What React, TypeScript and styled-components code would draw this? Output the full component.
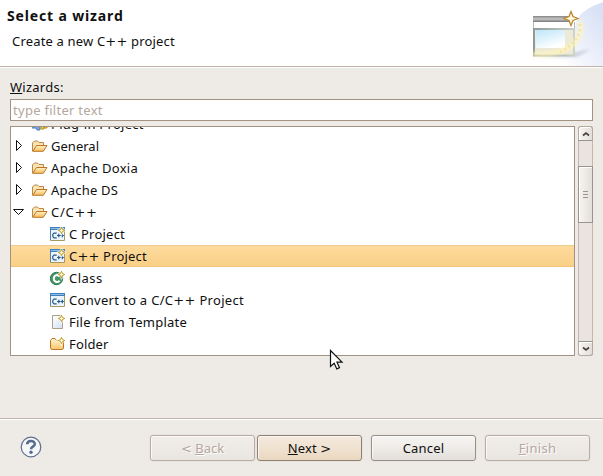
import React from 'react';
import styled, { createGlobalStyle } from 'styled-components';

const Global = createGlobalStyle`
  * { box-sizing: border-box; }
  body { margin: 0; background: #eeebe6; font: 13px/22px "Noto Sans", sans-serif; color: #101010; overflow: hidden; }
  svg { display: block; flex: none; }
`;
const Dialog = styled.main`width: 603px; height: 476px; display: flex; flex-direction: column; background: #eeebe6; overflow: hidden;`;
const Header = styled.header`height: 68px; flex: none; display: flex; justify-content: space-between; background: #fff; border-bottom: 1px solid #fff; box-shadow: inset 0 -1px #c2b3a6;`;
const Titles = styled.div`padding: 5px 0 0 7px;`;
const Title = styled.h1`margin: 0; font: bold 14px/22px "Noto Sans", sans-serif; letter-spacing: .85px; height: 25px; white-space: nowrap;`;
const Subtitle = styled.p`margin: 0 0 0 5px;`;
const Text = styled.span<{ $ls?: number }>`letter-spacing: ${p => p.$ls ?? 0}px; white-space: pre;`;
const Wide = styled.span`font-family: "DejaVu Sans", sans-serif; line-height: 1;`;
const Mnemonic = styled.span`text-decoration: underline 1px; text-underline-offset: 1px; text-decoration-skip-ink: none;`;
const Body = styled.section`height: 350px; flex: none; padding: 8px 10px 0; display: flex; flex-direction: column;`;
const FieldLabel = styled.label`height: 23px; flex: none;`;
const Filter = styled.div`height: 22px; flex: none; border: 1px solid #a19283; background: #fff; padding-left: 2px; line-height: 21px; color: #b5a79c; width: 583px;`;
const TreeArea = styled.div`display: flex; gap: 3px; margin-top: 5px; height: 230px;`;
const Tree = styled.div`width: 565px; border: 1px solid #a19283; background: #fff; overflow: hidden;`;
const Rows = styled.div`margin-top: -14px;`;
const Row = styled.div<{ $child?: boolean; $selected?: boolean }>`
  height: 22px; display: flex; align-items: center; padding-left: ${p => (p.$child ? 39 : 0)}px;
  background: ${p => (p.$selected ? 'linear-gradient(#fedb9d, #f9cf86)' : 'transparent')};
  box-shadow: ${p => (p.$selected ? 'inset 0 1px #efca91, inset 0 -1px #f0c47b' : 'none')};
`;
const Arrow = styled.span`width: 21px; display: flex;`;
const Icon = styled.span<{ $w: number }>`width: ${p => p.$w}px; flex: none; display: flex;`;
const Scrollbar = styled.div`width: 15px; display: flex; flex-direction: column; background: #e9e4df; border: solid #c5b7ab; border-width: 0 1px; border-radius: 3px;`;
const ScrollPart = styled.div<{ $h: number; $up?: boolean; $down?: boolean }>`
  height: ${p => p.$h}px; width: 15px; margin-left: -1px; flex: none; display: flex; align-items: center; justify-content: center;
  border: 1px solid #9b948d; background: linear-gradient(90deg, #f6f4f2, #e4dfda); box-shadow: inset 1px 1px #fff;
  border-color: ${p => (p.$up ? '#b5aaa0 #b5aaa0 #9b948d' : p.$down ? '#9b948d #b5aaa0 #b5aaa0' : '#9b948d')};
  border-radius: ${p => (p.$up ? '3px 3px 0 0' : p.$down ? '0 0 3px 3px' : '0')};
`;
const Track = styled.div<{ $h: number }>`height: ${p => p.$h}px; flex: none;`;
const Footer = styled.footer`height: 58px; flex: none; border-top: 1px solid #c2b3a6; box-shadow: inset 0 1px #fff; display: flex; align-items: flex-start; padding: 16px 13px 0 20px;`;
const Help = styled.div`width: 130px; padding-top: 1px;`;
const Button = styled.button<{ $tone?: 'default' | 'disabled'; $gap?: number }>`
  width: 105px; height: 26px; flex: none; margin: 0 ${p => p.$gap ?? 0}px 0 0; padding: 0 0 1px; font: 13px/22px "Noto Sans", sans-serif;
  border-radius: 3px; border: 1px solid ${p => (p.$tone === 'disabled' ? '#b9ada3' : p.$tone === 'default' ? '#8c8174' : '#96908a')};
  color: ${p => (p.$tone === 'disabled' ? '#b5a79c' : '#101010')};
  text-shadow: ${p => (p.$tone === 'disabled' ? '1px 1px #fff' : 'none')};
  background: ${p => (p.$tone === 'default' ? 'linear-gradient(#f4eadf, #f0e2d0 50%, #ead7c0)' : p.$tone === 'disabled' ? 'linear-gradient(#f1eeea, #e9e5e1)' : 'linear-gradient(#f7f5f3, #eeebe8 50%, #e3deda)')};
  box-shadow: inset 1px 1px rgba(255,255,255,.7), 0 0 0 1px rgba(150,130,110,.06);
`;
const Pointer = styled.div`position: absolute; left: 329px; top: 349px;`;

/* Operator characters are set in a face with full-width math signs. */
const Label = ({ text, ls }: { text: string; ls?: number }) => (
  <Text $ls={ls}>
    {text.split(/([+<>]+)/).map((part, i) => (i % 2 ? <Wide key={i}>{part}</Wide> : part))}
  </Text>
);

const Sparkle = () => (
  <>
    <path d="M11.5 0 13 3l3 1.5L13 6l-1.5 3L10 6 7 4.5 10 3Z" fill="#fff" stroke="#fff" strokeWidth="1.5" opacity=".6" />
    <path d="m11.5 1.3 1 2.2 2.2 1-2.2 1-1 2.2-1-2.2-2.2-1 2.2-1Z" fill="#fff9d4" stroke="#bd971d" strokeWidth=".95" />
  </>
);

const FolderOpen = () => (
  <svg width="16" height="16" viewBox="0 0 16 16">
    <defs><linearGradient id="fo" x2="0" y2="1"><stop stopColor="#fff0c7" /><stop offset="1" stopColor="#f4bd5b" /></linearGradient></defs>
    <path d="M.5 13v-8l1-1 1-1h3l1.5 1.5h4.5v3" fill="#f9e3b2" stroke="#bc8746" />
    <path d="m.7 13.3 3.8-5.8H15l-3.7 5.8Z" fill="url(#fo)" stroke="#b97727" />
  </svg>
);
const CppIcon = ({ spark }: { spark?: boolean }) => (
  <svg width="16" height="16" viewBox="0 0 16 16">
    <path d="M.5 1.5h14v13H.5Z" fill="#edf5fc" stroke="#a7985e" />
    <path d="M0 1h15v3H0Z" fill="#3f7fbd" /><path d="M1 2h13v1H1Z" fill="#8dbee6" />
    <path d="M.5 4v10" stroke="#5380ac" />
    <path d="M6.7 7.2H4L2.8 8.4v2.2L4 11.8h2.7M7 9.5h3.5M8.8 7.8v3.4M10.8 9.5h3M12.3 7.8v3.4" fill="none" stroke="#25568c" strokeWidth="1.2" />
    {spark && <Sparkle />}
  </svg>
);
const ClassIcon = () => (
  <svg width="16" height="16" viewBox="0 0 16 16">
    <circle cx="6.5" cy="8.5" r="6.2" fill="#469467" stroke="#2b7950" />
    <path d="M9.6 6.4C7.8 4.2 3.8 5.2 3.8 8.6s3.7 4.4 5.9 2.2" fill="none" stroke="#fff" strokeWidth="2" /><Sparkle />
  </svg>
);
const FileIcon = () => (
  <svg width="16" height="16" viewBox="0 0 16 16">
    <defs><linearGradient id="fi" x2="1" y2="1"><stop stopColor="#fff" /><stop offset="1" stopColor="#d3dff5" /></linearGradient></defs>
    <path d="M2.5 1.5h8l2 2v11h-10Z" fill="url(#fi)" stroke="#aaa184" /><Sparkle />
  </svg>
);
const FolderIcon = () => (
  <svg width="16" height="16" viewBox="0 0 16 16">
    <defs><linearGradient id="fc" x2="0" y2="1"><stop stopColor="#fff3cf" /><stop offset="1" stopColor="#fac66b" /></linearGradient></defs>
    <path d="M.5 12V4.5l1.5-2h3l1.5 2h7V12l-1 1.5h-11Z" fill="url(#fc)" stroke="#b97727" /><Sparkle />
  </svg>
);
const PluginIcon = () => (
  <svg width="16" height="16" viewBox="0 0 16 16">
    <path d="M0 8h3l2-3h3v9H5l-1-2H0Z" fill="#75a4d8" stroke="#5282b9" /><path d="M9 10h3v3H9ZM12 5h3v7h-3Z" fill="#f5d255" stroke="#b68e13" />
  </svg>
);
const Closed = () => <svg width="16" height="16" viewBox="0 0 16 16"><path d="M5.5 2.5v10l5-5Z" fill="#fff" stroke="#111" /></svg>;
const Opened = () => <svg width="16" height="16" viewBox="0 0 16 16"><path d="M2.5 5.5h10l-5 5Z" fill="#fff" stroke="#111" /></svg>;
const Chevron = ({ down }: { down?: boolean }) => (
  <svg width="8" height="6" viewBox="0 0 8 6"><path d={down ? 'M1 1.5 4 4l3-2.5' : 'M1 4.5 4 2l3 2.5'} fill="none" stroke="#49433e" strokeWidth="1.7" /></svg>
);
const Banner = () => (
  <svg width="100" height="66" viewBox="0 0 100 66">
    <defs>
      <linearGradient id="sky" x1=".25" y1=".75" x2="1" y2=".2"><stop stopColor="#fff" /><stop offset=".4" stopColor="#eff2fb" /><stop offset="1" stopColor="#d8e1f5" /></linearGradient>
      <linearGradient id="bar" x2="0" y2="1"><stop stopColor="#858585" /><stop offset=".5" stopColor="#c6c6c6" /><stop offset="1" stopColor="#777" /></linearGradient>
      <linearGradient id="pane" x2=".5" y2="1"><stop stopColor="#bde5fa" /><stop offset="1" stopColor="#fff" /></linearGradient>
      <linearGradient id="frame" gradientUnits="userSpaceOnUse" x1="30" y1="0" x2="74" y2="0"><stop stopColor="#8d9999" /><stop offset="1" stopColor="#cfd5ca" /></linearGradient>
      <filter id="soft" filterUnits="userSpaceOnUse" x="0" y="0" width="100" height="66"><feGaussianBlur stdDeviation="1.6" /></filter>
    </defs>
    <path d="M100 2C86 7 78 12 74 20c-3 17-20 33-44 46h70Z" fill="url(#sky)" />
    <path d="M36 57h38l14-8-14 3Z" fill="#8292b3" opacity=".35" filter="url(#soft)" />
    <path d="M30 16h42v40H30Z" fill="#fff" />
    <path d="M30.5 18v10M71.5 22v8" stroke="#b5bab8" />
    <path d="M30 16h40v6H30Z" fill="url(#bar)" />
    <path d="M31 29h40v26.5H31Z" fill="#ece9d8" stroke="url(#frame)" strokeWidth="2" />
    <path d="M33 30h29v18H33Z" fill="url(#pane)" />
    <path d="M77 21c5 20-14 36-47 33" fill="none" stroke="#fff5bd" strokeWidth="5" opacity=".75" filter="url(#soft)" />
    <path d="M77 24q1 18-20 28" fill="none" stroke="#f0d97e" strokeWidth="2.5" strokeDasharray="2 3" opacity=".55" />
    <path d="m68 11.5 2 5 5 2-5 2-2 5-2-5-5-2 5-2Z" fill="#fff8db" stroke="#bd8730" strokeWidth="1.3" />
  </svg>
);

const groups = [
  { label: 'Plug-in Project', plugin: true, ls: 0.27 },
  { label: 'General', ls: 0.02 },
  { label: 'Apache Doxia', ls: 0.33 },
  { label: 'Apache DS', ls: 0.22 },
  { label: 'C/C++', open: true, ls: 0.7 },
];
const wizards = [
  { label: 'C Project', icon: <CppIcon spark />, ls: 0.22 },
  { label: 'C++ Project', icon: <CppIcon spark />, selected: true, ls: 0.18 },
  { label: 'Class', icon: <ClassIcon />, ls: 0.45 },
  { label: 'Convert to a C/C++ Project', icon: <CppIcon />, ls: 0.31 },
  { label: 'File from Template', icon: <FileIcon />, ls: 0.25 },
  { label: 'Folder', icon: <FolderIcon />, ls: 0.15 },
];

export default function App() {
  return (
    <Dialog>
      <Global />
      <Header>
        <Titles>
          <Title>Select a wizard</Title>
          <Subtitle><Label text="Create a new C++ project" ls={0.17} /></Subtitle>
        </Titles>
        <Banner />
      </Header>
      <Body>
        <FieldLabel><Text $ls={0.25}><Mnemonic>W</Mnemonic>izards:</Text></FieldLabel>
        <Filter><Text $ls={0.28}>type filter text</Text></Filter>
        <TreeArea>
          <Tree>
            <Rows>
              {groups.map(g => (
                <Row key={g.label}>
                  <Arrow>{!g.plugin && (g.open ? <Opened /> : <Closed />)}</Arrow>
                  <Icon $w={19}>{g.plugin ? <PluginIcon /> : <FolderOpen />}</Icon>
                  <Label text={g.label} ls={g.ls} />
                </Row>
              ))}
              {wizards.map(w => (
                <Row key={w.label} $child $selected={w.selected}>
                  <Icon $w={19}>{w.icon}</Icon>
                  <Label text={w.label} ls={w.ls} />
                </Row>
              ))}
            </Rows>
          </Tree>
          <Scrollbar>
            <ScrollPart $h={15} $up><Chevron /></ScrollPart>
            <Track $h={25} />
            <ScrollPart $h={57}>
              <svg width="5" height="7" viewBox="0 0 5 7"><path d="M0 .5h5M0 3.5h5M0 6.5h5" stroke="#9b948d" /></svg>
            </ScrollPart>
            <Track $h={118} />
            <ScrollPart $h={15} $down><Chevron down /></ScrollPart>
          </Scrollbar>
        </TreeArea>
      </Body>
      <Footer>
        <Help>
          <svg width="22" height="22" viewBox="0 0 22 22">
            <circle cx="11" cy="11" r="9.8" fill="#f6f7f9" stroke="#5b6e8e" strokeWidth="1.2" />
            <path d="M7.2 8.3C7.2 4 14.8 4 14.8 8c0 2.8-3.8 2.5-3.8 5.2" fill="none" stroke="#576b8d" strokeWidth="2.5" />
            <circle cx="11" cy="16.2" r="1.7" fill="#576b8d" />
          </svg>
        </Help>
        <Button $tone="disabled" $gap={2}><Text><Wide>{'<'}</Wide> <Mnemonic>B</Mnemonic>ack</Text></Button>
        <Button $tone="default" $gap={9}><Text $ls={0.1}><Mnemonic>N</Mnemonic>ext <Wide>{'>'}</Wide></Text></Button>
        <Button $gap={9}><Text $ls={0.2}>Cancel</Text></Button>
        <Button $tone="disabled"><Text $ls={0.3}><Mnemonic>F</Mnemonic>inish</Text></Button>
      </Footer>
      <Pointer>
        <svg width="16" height="22" viewBox="0 0 16 22">
          <path d="M1.5 1.5v16l3.7-3.3 2.6 5.7 2.7-1.2L8 13.2h5Z" fill="#fff" stroke="#111" strokeWidth="1.2" />
        </svg>
      </Pointer>
    </Dialog>
  );
}
